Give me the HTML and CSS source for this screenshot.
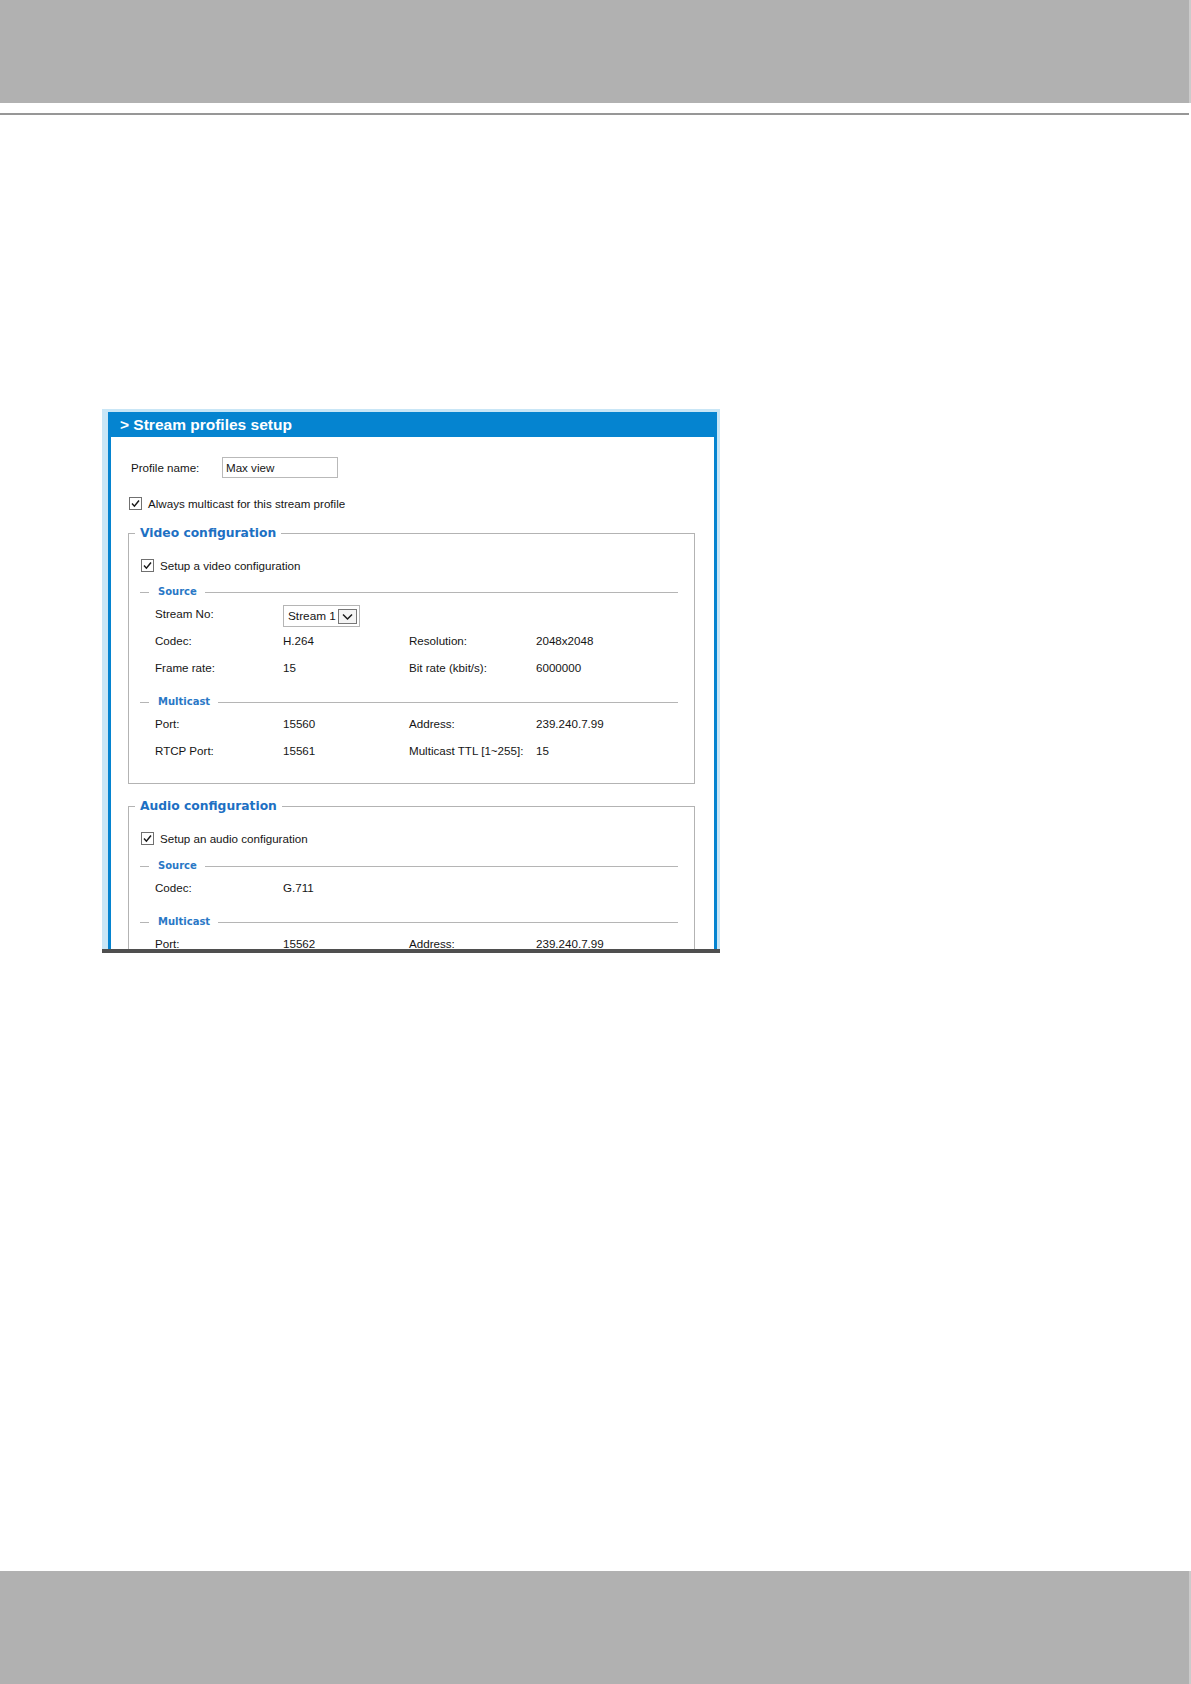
FILE: index.html
```html
<!DOCTYPE html>
<html lang="en">
<head>
<meta charset="utf-8">
<title>Stream profiles setup</title>
<link rel="stylesheet" href="styles.css">
</head>
<body>
<div class="band band-top"></div>
<div class="rule"></div>

<div class="panel">
  <div class="frame">
    <div class="frame-title">&gt; Stream profiles setup</div>
    <div class="frame-body">
      <div class="profile-row">
        <span class="profile-label">Profile name:</span>
        <span class="text-input">Max view</span>
      </div>
      <div class="check-row check-row-top">
        <svg class="cbox" width="13" height="13" viewBox="0 0 13 13"><rect x="0.5" y="0.5" width="12" height="12" fill="#fff" stroke="#707070"/><polyline points="3,6.6 5.4,9.2 10,3.6" fill="none" stroke="#1a1a1a" stroke-width="1.5"/></svg>
        <span>Always multicast for this stream profile</span>
      </div>

      <fieldset class="group">
        <legend>Video configuration</legend>
        <div class="check-row">
          <svg class="cbox" width="13" height="13" viewBox="0 0 13 13"><rect x="0.5" y="0.5" width="12" height="12" fill="#fff" stroke="#707070"/><polyline points="3,6.6 5.4,9.2 10,3.6" fill="none" stroke="#1a1a1a" stroke-width="1.5"/></svg>
          <span>Setup a video configuration</span>
        </div>
        <div class="sub-legend"><span class="dash"></span><span class="sub-title">Source</span><span class="line"></span></div>
        <div class="rows">
          <div class="row">
            <span>Stream No:</span>
            <span class="select"><span class="select-text">Stream 1</span><span class="select-arrow"><svg width="17" height="13" viewBox="0 0 17 13"><polyline points="4,4.5 8.5,9 13,4.5" fill="none" stroke="#1a1a1a" stroke-width="1.5"/></svg></span></span>
          </div>
          <div class="row"><span>Codec:</span><span>H.264</span><span>Resolution:</span><span>2048x2048</span></div>
          <div class="row"><span>Frame rate:</span><span>15</span><span>Bit rate (kbit/s):</span><span>6000000</span></div>
        </div>
        <div class="sub-legend sub-legend-gap"><span class="dash"></span><span class="sub-title">Multicast</span><span class="line"></span></div>
        <div class="rows">
          <div class="row"><span>Port:</span><span>15560</span><span>Address:</span><span>239.240.7.99</span></div>
          <div class="row"><span>RTCP Port:</span><span>15561</span><span>Multicast TTL [1~255]:</span><span>15</span></div>
        </div>
      </fieldset>

      <fieldset class="group group-audio">
        <legend>Audio configuration</legend>
        <div class="check-row">
          <svg class="cbox" width="13" height="13" viewBox="0 0 13 13"><rect x="0.5" y="0.5" width="12" height="12" fill="#fff" stroke="#707070"/><polyline points="3,6.6 5.4,9.2 10,3.6" fill="none" stroke="#1a1a1a" stroke-width="1.5"/></svg>
          <span>Setup an audio configuration</span>
        </div>
        <div class="sub-legend sub-legend-audio"><span class="dash"></span><span class="sub-title">Source</span><span class="line"></span></div>
        <div class="rows">
          <div class="row"><span>Codec:</span><span>G.711</span></div>
        </div>
        <div class="sub-legend sub-legend-gap"><span class="dash"></span><span class="sub-title">Multicast</span><span class="line"></span></div>
        <div class="rows">
          <div class="row row-last"><span>Port:</span><span>15562</span><span>Address:</span><span>239.240.7.99</span></div>
        </div>
      </fieldset>
    </div>
  </div>
</div>
<div class="panel-base"></div>

<div class="band band-bottom"></div>
</body>
</html>
```

FILE: styles.css
```css
html, body {
  margin: 0;
  padding: 0;
  background: #ffffff;
}

body {
  width: 1191px;
  font-family: "Liberation Sans", Arial, sans-serif;
  color: #151515;
}

.band {
  width: 1189px;
  background: #b1b1b1;
  border-right: 2px solid #cbcbcb;
}

.band-top {
  height: 103px;
}

.band-bottom {
  height: 113px;
  margin-top: 618px;
}

.rule {
  width: 1189px;
  height: 2px;
  margin-top: 10px;
  background: #979797;
}

.panel {
  box-sizing: border-box;
  width: 618px;
  height: 540px;
  margin-top: 294px;
  margin-left: 102px;
  padding: 3px 3px 0 6px;
  background: #c9e6f6;
}

.frame {
  box-sizing: border-box;
  height: 537px;
  padding: 0 3px 0 3px;
  background: #0584d0;
}

.frame-title {
  height: 25px;
  line-height: 25px;
  margin-left: -3px;
  padding-left: 12px;
  color: #ffffff;
  font-family: "Liberation Sans", Arial, sans-serif;
  font-weight: bold;
  font-size: 15.5px;
}

.frame-body {
  height: 512px;
  overflow: hidden;
  background: #ffffff;
  font-size: 11.6px;
}

.profile-row {
  display: flex;
  align-items: center;
  height: 21px;
  margin-top: 20px;
  padding-left: 20px;
}

.profile-label {
  width: 91px;
}

.text-input {
  box-sizing: border-box;
  width: 116px;
  height: 21px;
  line-height: 19px;
  padding-left: 3px;
  border: 1px solid #b9b9b9;
  background: #ffffff;
}

.check-row {
  display: flex;
  align-items: center;
  gap: 6px;
  height: 20px;
  margin-top: 14px;
  padding-left: 12px;
}

.check-row-top {
  margin-top: 15px;
  padding-left: 18px;
}

.cbox {
  display: block;
  flex: none;
}

.group {
  box-sizing: border-box;
  width: 567px;
  margin: 13px 0 0 17px;
  padding: 0 0 19px 0;
  border: 1px solid #b3b3b3;
  min-width: 0;
}

.group-audio {
  margin-top: 15px;
}

.group legend {
  margin-left: 6px;
  padding: 0 5px;
  height: 15px;
  line-height: 15px;
  color: #1d70c3;
  font-family: "DejaVu Sans", Verdana, sans-serif;
  font-weight: bold;
  font-size: 12.3px;
}

.sub-legend {
  display: flex;
  align-items: center;
  height: 14px;
  margin-top: 10px;
  padding: 0 16px 0 11px;
}

.sub-legend-audio {
  margin-top: 11px;
}

.sub-legend-gap {
  margin-top: 14px;
}

.dash {
  width: 9px;
  height: 1px;
  background: #b5b5b5;
}

.sub-title {
  padding: 0 8px 0 9px;
  line-height: 14px;
  color: #2a78c6;
  font-family: "DejaVu Sans", Verdana, sans-serif;
  font-weight: bold;
  font-size: 10px;
}

.line {
  flex: 1;
  height: 1px;
  background: #b5b5b5;
}

.rows {
  margin-top: 1px;
  padding-left: 26px;
}

.row {
  display: grid;
  grid-template-columns: 128px 126px 127px 1fr;
  align-items: center;
  height: 27px;
}

.row-last {
  align-items: start;
  padding-top: 7px;
  box-sizing: border-box;
  line-height: 13px;
}

.select {
  box-sizing: border-box;
  display: flex;
  align-items: center;
  justify-content: space-between;
  align-self: start;
  width: 77px;
  height: 22px;
  margin-top: 5px;
  padding: 0 2px 0 4px;
  border: 1px solid #b5b5b5;
  background: #ffffff;
  font-size: 11.8px;
}

.select-arrow {
  box-sizing: border-box;
  display: flex;
  align-items: center;
  justify-content: center;
  width: 19px;
  height: 15px;
  border: 1px solid #777777;
  background: #f4f4f4;
}

.select-arrow svg {
  display: block;
}

.panel-base {
  width: 618px;
  height: 4px;
  margin-left: 102px;
  background: #4f4f4f;
}
```
